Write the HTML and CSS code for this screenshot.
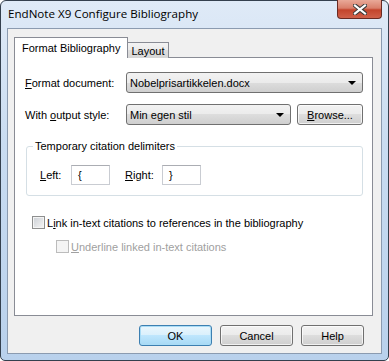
FILE: index.html
```html
<!DOCTYPE html>
<html lang="en">
<head>
  <meta charset="UTF-8">
  <title>EndNote X9 Configure Bibliography</title>
  <link rel="stylesheet" href="styles.css">
</head>
<body>
  <div class="window">
    <div class="titlebar">
      <span class="title">EndNote X9 Configure Bibliography</span>
      <div class="close">
        <svg width="14" height="11" viewBox="0 0 14 11">
          <path d="M2 1.5 L12 9.5 M12 1.5 L2 9.5" stroke="#3a3a3a" stroke-width="4.2" stroke-linecap="square"/>
          <path d="M2 1.5 L12 9.5 M12 1.5 L2 9.5" stroke="#fff" stroke-width="2.2" stroke-linecap="square"/>
        </svg>
      </div>
    </div>

    <div class="client">
      <div class="tabs">
        <div class="tab active">Format Bibliography</div>
        <div class="tab">Layout</div>
      </div>

      <div class="panel">
        <div class="row">
          <label class="lbl"><u>F</u>ormat document:</label>
          <div class="combo wide">
            <span>Nobelprisartikkelen.docx</span>
            <i class="arrow"></i>
          </div>
        </div>
        <div class="row">
          <label class="lbl">With <u>o</u>utput style:</label>
          <div class="combo narrow">
            <span>Min egen stil</span>
            <i class="arrow"></i>
          </div>
          <div class="btn browse"><u>B</u>rowse...</div>
        </div>

        <div class="group">
          <span class="legend">Temporary citation delimiters</span>
          <div class="delims">
            <label><u>L</u>eft:</label>
            <div class="textbox">{</div>
            <label class="right-lbl"><u>R</u>ight:</label>
            <div class="textbox">}</div>
          </div>
        </div>

        <div class="check">
          <span class="box"></span>
          <span>L<u>i</u>nk in-text citations to references in the bibliography</span>
        </div>
        <div class="check sub disabled">
          <span class="box"></span>
          <span><u>U</u>nderline linked in-text citations</span>
        </div>
      </div>

      <div class="buttons">
        <div class="btn default">OK</div>
        <div class="btn">Cancel</div>
        <div class="btn help">Help</div>
      </div>
    </div>
  </div>
</body>
</html>
```

FILE: styles.css
```css
body {
  margin: 0;
  font-family: "Liberation Sans", Arial, sans-serif;
  font-size: 11px;
  color: #000;
  background: #fff;
}

.window {
  width: 389px;
  height: 361px;
  box-sizing: border-box;
  border: 1px solid #34404e;
  border-radius: 6px 6px 5px 5px;
  padding: 0 6px 6px;
  background: linear-gradient(#dfeaf7, #c9dcf1 40%, #b9d1ec);
  display: flex;
  flex-direction: column;
}

.titlebar {
  height: 27px;
  display: flex;
  justify-content: space-between;
  align-items: flex-start;
}

.title {
  font-family: "Open Sans", "Noto Sans", sans-serif;
  font-size: 11.6px;
  padding-left: 1px;
  margin-top: 5px;
  color: #000;
}

.close {
  width: 45px;
  height: 19px;
  margin-top: -1px;
  box-sizing: border-box;
  border: 1px solid #6a2a22;
  border-top: none;
  border-radius: 0 0 4px 4px;
  background: linear-gradient(#e9a998, #d97f6b 45%, #c3442c 55%, #d0614a);
  display: flex;
  align-items: center;
  justify-content: center;
}

.client {
  flex: 1;
  border: 1px solid #8b9bb0;
  background: #f0f0f0;
  padding: 8px 8px 0 6px;
  display: flex;
  flex-direction: column;
}

.tabs {
  display: flex;
  align-items: flex-end;
  height: 21px;
  margin-bottom: -1px;
  position: relative;
  z-index: 1;
}

.tab {
  border: 1px solid #898c95;
  border-bottom: none;
  height: 15px;
  padding: 0 4px 0 3px;
  background: linear-gradient(#f3f3f3, #ebebeb 50%, #dedede 50%, #d6d6d6);
  margin-left: -1px;
  line-height: 16px;
}

.tab.active {
  height: 20px;
  margin-left: 0;
  padding: 0 7px;
  background: #fff;
  line-height: 20px;
  position: relative;
  z-index: 2;
}

.panel {
  height: 259px;
  box-sizing: border-box;
  border: 1px solid #898c95;
  background: #fff;
  padding: 14px 0 0 10px;
}

.row {
  display: flex;
  align-items: center;
  height: 21px;
  margin-bottom: 11px;
}

.lbl {
  width: 101px;
}

.combo {
  height: 21px;
  box-sizing: border-box;
  border: 1px solid #707070;
  border-radius: 3px;
  background: linear-gradient(#f2f2f2, #ebebeb 50%, #dddddd 50%, #cfcfcf);
  display: flex;
  align-items: center;
  justify-content: space-between;
  padding: 0 6px 0 3px;
}

.combo.wide {
  width: 237px;
}

.combo.narrow {
  width: 165px;
}

.arrow {
  width: 0;
  height: 0;
  border-left: 4px solid transparent;
  border-right: 4px solid transparent;
  border-top: 4px solid #000;
}

.btn {
  height: 21px;
  box-sizing: border-box;
  border: 1px solid #707070;
  border-radius: 3px;
  background: linear-gradient(#f2f2f2, #ebebeb 50%, #dddddd 50%, #cfcfcf);
  box-shadow: inset 0 0 0 1px rgba(255,255,255,0.7);
  display: flex;
  align-items: center;
  justify-content: center;
  width: 73px;
}

.btn.browse {
  width: 66px;
  margin-left: 6px;
}

.btn.default {
  border-color: #3c7fb1;
  background: linear-gradient(#eaf6fd, #d9f0fc 50%, #bee6fd 50%, #a7d9f5);
  box-shadow: inset 0 0 0 1px #a9dcf6;
}

.btn.help {
  width: 63px;
}

.group {
  position: relative;
  margin: 21px 0 0 1px;
  width: 337px;
  height: 50px;
  box-sizing: border-box;
  border: 1px solid #d5dfe5;
  border-radius: 3px;
  padding: 18px 0 0 13px;
}

.group .legend {
  position: absolute;
  top: -8px;
  left: 6px;
  padding: 0 2px;
  line-height: 14px;
  background: #fff;
}

.delims {
  display: flex;
  align-items: center;
}

.delims label {
  width: 31px;
}

.delims .right-lbl {
  width: 37px;
  margin-left: 15px;
}

.textbox {
  width: 39px;
  height: 20px;
  box-sizing: border-box;
  border: 1px solid #c9ccd2;
  border-top-color: #abadb3;
  padding: 0 0 0 6px;
  line-height: 18px;
  background: #fff;
}

.check {
  display: flex;
  align-items: center;
  margin: 20px 0 0 7px;
  height: 13px;
}

.check .box {
  width: 13px;
  height: 13px;
  box-sizing: border-box;
  border: 1px solid #8e8f8f;
  background: linear-gradient(135deg, #cbcfd5, #f6f6f6);
  box-shadow: inset 0 0 0 1px #f4f4f4;
  margin-right: 2px;
}

.check.sub {
  margin: 11px 0 0 31px;
}

.check.disabled {
  color: #a0a0a0;
}

.check.disabled .box {
  border-color: #bcbcbc;
  background: #f4f4f4;
}

.buttons {
  display: flex;
  justify-content: flex-end;
  gap: 8px;
  margin-top: 9px;
  padding-right: 9px;
}
```
